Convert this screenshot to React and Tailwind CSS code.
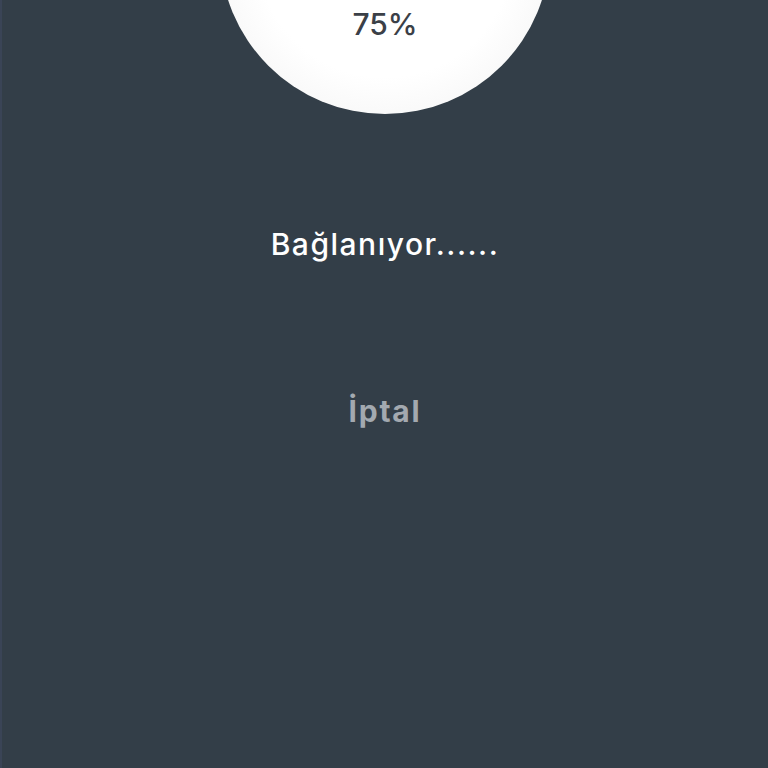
import React from 'react';

export default function App() {
  return (
    <div
      className="h-screen w-full overflow-hidden bg-[#333e48] border-l-2 border-[#3a4456] flex flex-col items-center"
      style={{ fontFamily: 'Inter, "Noto Sans", sans-serif' }}
    >
      <div className="-mt-[216px] w-[330px] h-[330px] shrink-0 rounded-full bg-[radial-gradient(circle,#ffffff_55%,#efefef_100%)] flex flex-col items-center pt-[222px]">
        <span className="text-[30px] leading-[36px] font-medium text-[#3b4047]">75%</span>
      </div>

      <p className="mt-[112px] text-[30px] leading-[36px] font-medium tracking-[0.05em] text-white">Bağlanıyor......</p>

      <button className="mt-[131px] text-[30px] leading-[36px] font-bold tracking-[0.06em] text-[#a3a9b0]">İptal</button>
    </div>
  );
}
